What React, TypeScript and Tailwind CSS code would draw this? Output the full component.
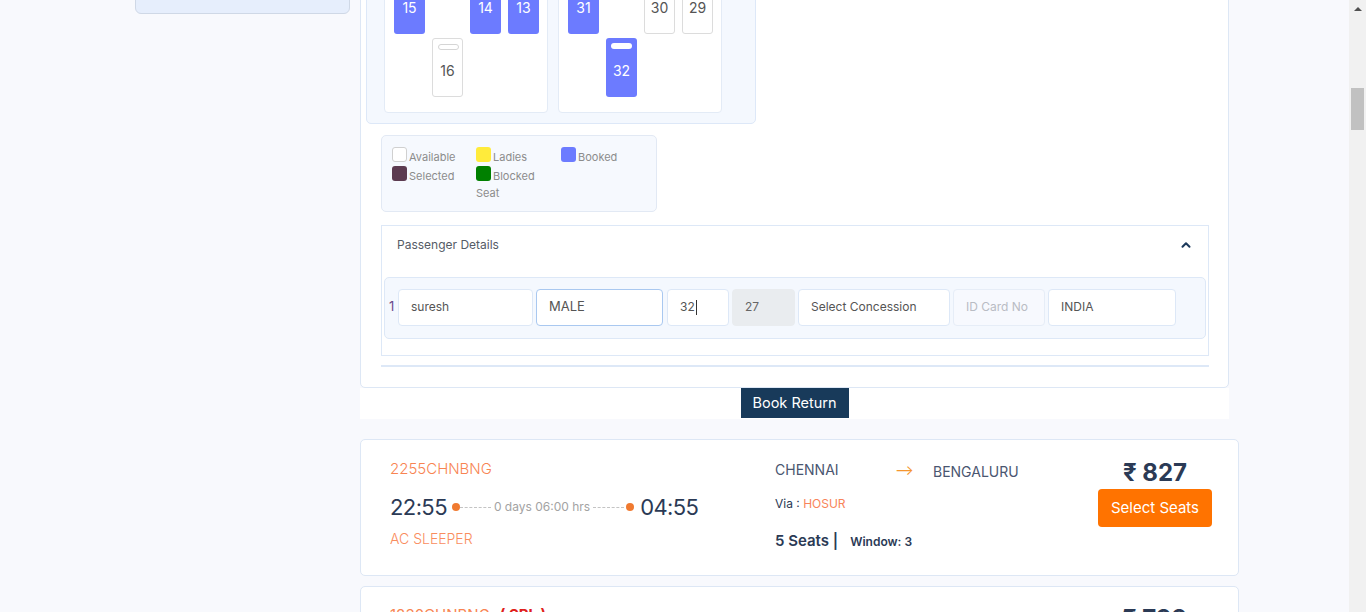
import React from "react";
import { ChevronUp } from "lucide-react";

const font = { fontFamily: "Inter, 'Noto Sans', sans-serif" };

function Seat({ n, booked, tall }: { n: string; booked?: boolean; tall?: boolean }) {
  return (
    <div
      className={`relative flex h-[59px] w-[31px] items-center justify-center rounded-[3px] text-[14px] ${
        booked ? "bg-[#6c7bff] text-white" : "border border-[#dcdcdc] bg-white text-[#555]"
      }`}
    >
      {tall && (
        <div
          className={`absolute left-[5px] top-[5px] h-[6px] w-[21px] rounded-full ${
            booked ? "bg-white" : "border border-[#d5d5d5] bg-white"
          }`}
        />
      )}
      <span className="mt-[6px]">{n}</span>
    </div>
  );
}

function Deck({ row1, row2 }: { row1: React.ReactNode[]; row2: React.ReactNode[] }) {
  return (
    <div className="w-[164px] rounded-[4px] border border-[#e3ebf6] bg-white pl-[9px] pr-[8px] pt-[10px] pb-[15px]">
      <div className="grid grid-cols-[31px_31px_31px_31px] gap-x-[7px] gap-y-[4px]">
        {row1}
        {row2}
      </div>
    </div>
  );
}

function Legend({ color, label, border }: { color: string; label: React.ReactNode; border?: boolean }) {
  return (
    <div className="flex h-[19px] items-start gap-[2px] text-[11px] text-[#8c8c8c]">
      <div
        className={`h-[15px] w-[15px] shrink-0 rounded-[3px] ${border ? "border border-[#d0d0d0]" : ""}`}
        style={{ background: color }}
      />
      <span className="mt-[2px] leading-[17px]">{label}</span>
    </div>
  );
}

function Field({
  w,
  value,
  cls = "",
  placeholder,
  caret,
}: {
  w: string;
  value: string;
  cls?: string;
  placeholder?: boolean;
  caret?: boolean;
}) {
  return (
    <div
      className={`flex h-[37px] shrink-0 items-center rounded-[4px] border px-[12px] text-[12px] ${w} ${cls} ${
        placeholder ? "text-[#b9bcc4]" : ""
      }`}
    >
      {value}
      {caret && <span className="ml-[1px] h-[15px] w-[1px] bg-[#333]" />}
    </div>
  );
}

export default function App() {
  return (
    <div className="flex h-[612px] w-[1366px] overflow-hidden bg-[#f8f9fd]" style={font}>
      <div className="flex flex-1 overflow-hidden pl-[135px]">
        {/* sidebar */}
        <div className="w-[215px] shrink-0">
          <div className="-mt-[20px] h-[34px] rounded-b-[6px] border border-[#cfd8e6] bg-[#e6eefc]" />
        </div>

        {/* main column */}
        <div className="ml-[10px] flex w-[879px] shrink-0 flex-col -mt-[59px]">
          {/* top card */}
          <div className="mr-[10px] shrink-0 rounded-b-[5px] border border-[#dde7f5] bg-white pt-[6px] pb-[20px]">
            <div className="ml-[5px] w-[390px] rounded-[5px] border border-[#dde8f8] bg-[#f4f8fe] pl-[17px] pt-[15px] pb-[10px]">
              <div className="flex gap-[10px]">
                <Deck
                  row1={[
                    <Seat key="15" n="15" booked tall />,
                    <div key="e1" />,
                    <Seat key="14" n="14" booked tall />,
                    <Seat key="13" n="13" booked tall />,
                  ]}
                  row2={[<div key="e2" />, <Seat key="16" n="16" tall />, <div key="e3" />, <div key="e4" />]}
                />
                <Deck
                  row1={[
                    <Seat key="31" n="31" booked tall />,
                    <div key="e1" />,
                    <Seat key="30" n="30" tall />,
                    <Seat key="29" n="29" tall />,
                  ]}
                  row2={[<div key="e2" />, <Seat key="32" n="32" booked tall />, <div key="e3" />, <div key="e4" />]}
                />
              </div>
            </div>

            {/* legend */}
            <div className="ml-[20px] mt-[11px] h-[77px] w-[276px] rounded-[5px] border border-[#e2e9f4] bg-[#f6f9fe] pl-[10px] pt-[11px]">
              <div className="grid grid-cols-[84px_85px_80px]">
                <Legend color="#ffffff" border label="Available" />
                <Legend color="#ffeb3b" label="Ladies" />
                <Legend color="#6c7bff" label="Booked" />
                <Legend color="#5c3b50" label="Selected" />
                <Legend
                  color="#008000"
                  label={
                    <>
                      Blocked
                      <br />
                      <span className="-ml-[17px] block">Seat</span>
                    </>
                  }
                />
              </div>
            </div>

            {/* accordion */}
            <div className="ml-[20px] mt-[13px] w-[828px] border border-[#dde8f7] bg-white">
              <div className="flex h-[38px] items-center justify-between pl-[15px] pr-[15px]">
                <span className="text-[12px] text-[#555b66]">Passenger Details</span>
                <ChevronUp size={14} strokeWidth={3.5} color="#1d3a5c" />
              </div>
              <div className="mx-[2px] mt-[13px] mb-[16px] flex h-[62px] items-center rounded-[5px] border border-[#dde8f7] bg-[#f4f8fe] pb-[2px] pl-[4px]">
                <span className="w-[9px] text-[13px] text-[#6b4a8b]">1</span>
                <div className="flex items-center">
                  <Field w="w-[135px]" value="suresh" cls="border-[#dde8f7] bg-white text-[#555] text-[11px]" />
                  <Field
                    w="ml-[3px] w-[127px]"
                    value="MALE"
                    cls="border-[#a9c8f0] bg-white text-[#555] text-[13px]"
                  />
                  <Field w="ml-[4px] w-[62px]" value="32" caret cls="border-[#dde8f7] bg-white text-[#555]" />
                  <Field w="ml-[3px] w-[63px]" value="27" cls="border-[#e9ecef] bg-[#e9ecef] text-[#666]" />
                  <Field
                    w="ml-[3px] w-[152px]"
                    value="Select Concession"
                    cls="border-[#dde8f7] bg-white text-[#555] text-[12.5px]"
                  />
                  <Field
                    w="ml-[3px] w-[92px]"
                    value="ID Card No"
                    cls="border-[#e6edf7] bg-[#f7f9fe] text-[11px]"
                    placeholder
                  />
                  <Field
                    w="ml-[3px] w-[128px]"
                    value="INDIA"
                    cls="border-[#dde8f7] bg-white text-[#555] text-[12.5px]"
                  />
                </div>
              </div>
            </div>
            <div className="ml-[20px] mt-[9px] h-[2px] w-[828px] bg-[#dde8f7]" />
          </div>

          {/* book return strip */}
          <div className="mr-[10px] flex h-[31px] shrink-0 justify-center bg-white">
            <button className="h-[30px] w-[108px] bg-[#183a5a] text-[14.5px] text-white">Book Return</button>
          </div>

          {/* result card */}
          <div className="mt-[20px] flex h-[137px] shrink-0 rounded-[5px] border border-[#dde7f5] bg-white">
            <div className="w-[384px] shrink-0 pl-[29px] pt-[19px]">
              <div className="text-[15px] font-light leading-[20px] text-[#f88452]">2255CHNBNG</div>
              <div className="mt-[15px] flex items-center text-[#2b3a55]">
                <span className="text-[22px] leading-[26px] tracking-[-0.6px]">22:55</span>
                <span className="ml-[5px] h-[8px] w-[8px] rounded-full bg-[#f07a30]" />
                <span className="w-[31px] border-t border-dashed border-[#c4c4c4]" />
                <span className="mx-[3px] text-[12px] text-[#a3a3a3]">0 days 06:00 hrs</span>
                <span className="w-[31px] border-t border-dashed border-[#c4c4c4]" />
                <span className="ml-[2px] h-[8px] w-[8px] rounded-full bg-[#f07a30]" />
                <span className="ml-[6px] text-[22px] leading-[26px] tracking-[-0.6px]">04:55</span>
              </div>
              <div className="mt-[10px] text-[14px] font-light leading-[18px] text-[#f98d5e]">AC SLEEPER</div>
            </div>
            <div className="w-[300px] shrink-0 pl-[30px] pt-[19px]">
              <div className="flex items-start text-[14px] text-[#4a5670]">
                <span className="w-[120px]">CHENNAI</span>
                <span className="w-[38px] text-[#f5962f]">⟶</span>
                <span className="pt-[2px]">BENGALURU</span>
              </div>
              <div className="mt-[13px] text-[12px] text-[#2b3a55]">
                Via : <span className="text-[#f8845a]">HOSUR</span>
              </div>
              <div className="mt-[17px] flex items-baseline text-[#2b3a55]">
                <span className="text-[15px] font-semibold">5 Seats |</span>
                <span className="ml-[12px] text-[12px] font-semibold">Window: 3</span>
              </div>
            </div>
            <div className="ml-auto mr-[26px] flex w-[114px] shrink-0 flex-col items-center pt-[18px]">
              <div className="whitespace-nowrap text-[24px] font-bold leading-[30px] text-[#2b3a55]">₹ 827</div>
              <button className="mt-[1px] h-[38px] w-[114px] rounded-[4px] bg-[#ff7300] text-[15px] text-white">
                Select Seats
              </button>
            </div>
          </div>

          {/* next card */}
          <div className="mt-[10px] flex h-[60px] shrink-0 rounded-[5px] border border-[#dde7f5] bg-white pl-[29px] pt-[17px]">
            <span className="text-[15px] text-[#f88452]">1830CHNBNG</span>
            <span className="ml-[10px] text-[15px] font-bold text-[#e0201b]">( SPL )</span>
            <div className="ml-auto mr-[26px] flex w-[114px] shrink-0 justify-center">
              <span className="whitespace-nowrap text-[24px] font-bold leading-[30px] text-[#2b3a55]">₹ 799</span>
            </div>
          </div>
        </div>
      </div>

      {/* scrollbar */}
      <div className="flex w-[17px] shrink-0 flex-col items-center bg-[#f1f1f1]">
        <div className="mt-[7px] h-0 w-0 border-x-[4px] border-b-[4px] border-x-transparent border-b-[#505050]" />
        <div className="mt-[77px] h-[42px] w-[13px] bg-[#c1c1c1]" />
      </div>
    </div>
  );
}
